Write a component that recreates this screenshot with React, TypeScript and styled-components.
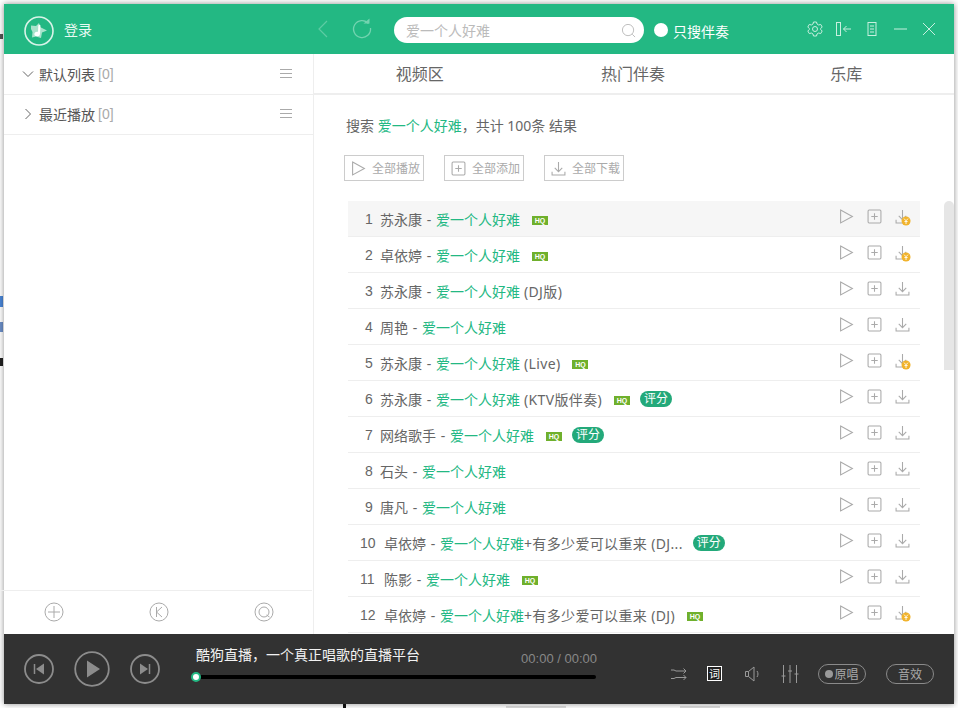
import React from "react";
import styled, { createGlobalStyle } from "styled-components";

const Global = createGlobalStyle`
  html, body { margin: 0; padding: 0; background: #fff; }
  body { width: 958px; height: 708px; overflow: hidden; position: relative;
    font-family: "Noto Sans", "Noto Sans CJK SC", "Liberation Sans", sans-serif; }
  * { box-sizing: border-box; }
`;

const Window = styled.div`
  width: 950px; height: 700px; margin: 4px; display: flex; flex-direction: column;
  background: #fff; box-shadow: 0 0 6px rgba(0,0,0,.45); position: relative; z-index: 1;
`;
const TitleBar = styled.header`
  height: 50px; flex: none; background: #23b883; display: flex; align-items: center; color: #fff;
  position: relative;
`;
const Logo = styled.div`
  margin-left: 20px; margin-top: 4px; width: 30px; height: 30px; display: flex;
`;
const LoginText = styled.span`
  margin-left: 10px; font-size: 14px; color: #eafaf3; width: 50px;
`;
const Nav = styled.div`
  margin-left: 198px; width: 21px; height: 50px; display: flex; align-items: center; justify-content: center;
`;
const Refresh = styled.div`
  margin-left: 18px; width: 22px; height: 22px; margin-top: -2px; display: flex;
`;
const Search = styled.div`
  margin-left: 21px; margin-top: 2px; width: 250px; height: 26px; border-radius: 13px; background: #fff;
  display: flex; align-items: center; justify-content: space-between; padding: 0 8px 0 12px;
  font-size: 14px; color: #bbb;
`;
const RadioDot = styled.span`
  margin-left: 10px; margin-top: 2px; width: 14px; height: 14px; border-radius: 50%; background: #fff; flex: none;
`;
const OnlyText = styled.span`
  margin-left: 5px; margin-top: 3px; font-size: 14px; color: #fff; white-space: nowrap;
`;
const WinIcons = styled.div`
  margin-left: auto; margin-right: 16px; margin-top: 0; display: flex; align-items: center; gap: 10.5px; height: 20px;
`;
const WinIcon = styled.svg`
  width: 18px; height: 18px; fill: none; stroke: #c8efdf; stroke-width: 1; display: block;
`;

const Main = styled.div`
  flex: 1; min-height: 0; display: flex;
`;
const Side = styled.aside`
  width: 310px; flex: none; border-right: 1px solid #eee; display: flex; flex-direction: column; padding-top: 1px;
`;
const Group = styled.div`
  height: 40px; flex: none; border-bottom: 1px solid #eee; display: flex; align-items: center;
  padding: 0 21px 2px 18px; font-size: 14px; color: #555;
`;
const Count = styled.span`
  color: #aaa; margin-left: 3px; font-family: "Liberation Sans", sans-serif;
`;
const Caret = styled.svg`
  width: 12px; height: 12px; margin-right: 5px; fill: none; stroke: #666; stroke-width: 1; flex: none;
`;
const Burger = styled.svg`
  width: 12px; height: 10px; margin-left: auto; stroke: #aaa; stroke-width: 1; flex: none;
`;
const SideSpace = styled.div`
  flex: 1;
`;
const SideFoot = styled.div`
  height: 44px; flex: none; border-top: 1px solid #eee; display: grid; grid-template-columns: repeat(3, 105px);
  align-items: start; justify-items: center; margin-left: -3px; margin-right: 1px; padding-top: 11px;
`;
const FootIcon = styled.svg`
  width: 20px; height: 20px; fill: none; stroke: #aaa; stroke-width: 1;
`;

const Content = styled.section`
  flex: 1; min-width: 0; display: flex; flex-direction: column; position: relative;
`;
const Tabs = styled.nav`
  height: 41px; flex: none; display: grid; grid-template-columns: repeat(3, 1fr); border-bottom: 2px solid #eee;
`;
const Tab = styled.div`
  display: flex; align-items: center; justify-content: center; font-size: 16px; color: #666; padding: 0 2px 1px 0;
`;
const Summary = styled.div`
  padding: 21px 0 0 32px; height: 50px; flex: none; font-size: 14px; color: #666; line-height: 20px; white-space: nowrap;
`;
const Hit = styled.span`
  color: #23b883;
`;
const Actions = styled.div`
  display: flex; gap: 20px; padding-left: 30px; height: 26px; flex: none; margin-top: 10px;
`;
const ActionBtn = styled.div`
  width: 80px; height: 26px; border: 1px solid #ccc; display: flex; align-items: center; padding: 0 0 1px 6px;
  gap: 6px; font-size: 12px; color: #aaa; white-space: nowrap;
`;
const ActionIcon = styled.svg`
  width: 15px; height: 15px; fill: none; stroke: #aaa; stroke-width: 1; flex: none; margin-top: 1px;
`;
const List = styled.div`
  margin: 20px 0 0 34px; width: 572px; flex: 1; min-height: 0; overflow: hidden;
`;
const Row = styled.div<{ $on?: boolean }>`
  height: 36px; border-bottom: 1px solid #eee; background: ${p => (p.$on ? "#f6f6f6" : "#fff")};
  display: flex; align-items: center; padding-left: 12px; font-size: 14px; color: #666; position: relative;
`;
const Num = styled.span<{ $wide?: boolean }>`
  font-size: 14px; color: #666; font-family: "Liberation Sans", sans-serif; width: ${p => (p.$wide ? "24px" : "20px")};
  flex: none; padding-left: ${p => (p.$wide ? "0" : "5px")};
`;
const Title = styled.span`
  white-space: pre;
`;
const Dash = styled.span`
  display: inline-block; width: 14px; text-align: center;
`;
const Extra = styled.span`
  letter-spacing: .35px;
`;
const HQ = styled.span`
  margin-left: 12px; width: 16px; height: 9px; background: #6fb02c; color: #fff; font-family: "Liberation Sans", sans-serif;
  font-size: 7px; font-weight: 700; line-height: 9px; text-align: center; flex: none; margin-top: 3px;
`;
const Score = styled.span`
  margin-left: 10px; width: 32px; height: 16px; border-radius: 8px; background: #23a97a; color: #fff;
  font-size: 12px; line-height: 16px; text-align: center; flex: none;
`;
const RowIcons = styled.div`
  margin-left: auto; display: flex; align-items: center; gap: 13px; width: 71px; margin-top: -5px; margin-right: 10px; flex: none;
`;
const RowIcon = styled.svg`
  width: 15px; height: 15px; fill: none; stroke: #aaa; stroke-width: 1; flex: none; overflow: visible;
`;
const Scrollbar = styled.div`
  position: absolute; top: 147px; right: 0; width: 10px; height: 169px; background: #e6e6e6; border-radius: 5px 5px 0 0;
`;

const Player = styled.footer`
  height: 70px; flex: none; background: #323232; display: flex; align-items: center; position: relative; color: #fff;
`;
const Transport = styled.div`
  display: flex; align-items: center; margin-left: 20px; gap: 20px; width: 172px; flex: none;
`;
const TransportIcon = styled.svg<{ $big?: boolean }>`
  width: ${p => (p.$big ? "36px" : "30px")}; height: ${p => (p.$big ? "36px" : "30px")}; flex: none;
`;
const Track = styled.div`
  width: 400px; flex: none; height: 50px; display: flex; flex-direction: column; padding-top: 1px;
`;
const TrackTop = styled.div`
  display: flex; justify-content: space-between; align-items: center; font-size: 14px; height: 21px; color: #f2f2f2;
`;
const Slogan = styled.span`
  margin-top: -4px;
`;
const Time = styled.span`
  font-family: "Liberation Sans", sans-serif; font-size: 13px; color: #888; margin-top: 5px; margin-right: -1px;
`;
const Bar = styled.div`
  position: relative; height: 4px; margin-top: 9px; background: #000; border-radius: 2px;
`;
const Thumb = styled.span`
  position: absolute; left: -5px; top: -3px; width: 10px; height: 10px; border-radius: 50%;
  background: #fff; border: 2px solid #23b883;
`;
const Tools = styled.div`
  display: flex; align-items: center; margin-left: 74px; margin-top: 9px;
`;
const ToolIcon = styled.svg`
  width: 18px; height: 18px; fill: none; stroke: #999; stroke-width: 1; flex: none; margin-right: 19px;
`;
const Lyric = styled.div`
  width: 15px; height: 15px; border: 1px solid #fff; background: #222; color: #fff; font-size: 11px; line-height: 13px;
  text-align: center; margin-right: 22px; flex: none; overflow: hidden;
`;
const Pill = styled.div`
  width: 48px; height: 20px; border: 1px solid #8a8a8a; border-radius: 10px; color: #aaa; font-size: 12px;
  display: flex; align-items: center; justify-content: center; gap: 1px; flex: none; margin-right: 20px;
`;
const PillDot = styled.span`
  width: 8px; height: 8px; border-radius: 50%; background: #999;
`;
const Backdrop = styled.span<{ $x: number; $y: number; $w: number; $h: number; $c: string }>`
  position: absolute; z-index: 0; left: ${p => p.$x}px; top: ${p => p.$y}px; width: ${p => p.$w}px; height: ${p => p.$h}px;
  background: ${p => p.$c};
`;

type R = { n: number; a: string; t: string; x?: string; hq?: boolean; score?: boolean; pay?: boolean };
const rows: R[] = [
  { n: 1, a: "苏永康", t: "爱一个人好难", hq: true, pay: true },
  { n: 2, a: "卓依婷", t: "爱一个人好难", hq: true, pay: true },
  { n: 3, a: "苏永康", t: "爱一个人好难", x: " (DJ版)" },
  { n: 4, a: "周艳", t: "爱一个人好难" },
  { n: 5, a: "苏永康", t: "爱一个人好难", x: " (Live)", hq: true, pay: true },
  { n: 6, a: "苏永康", t: "爱一个人好难", x: " (KTV版伴奏)", hq: true, score: true },
  { n: 7, a: "网络歌手", t: "爱一个人好难", hq: true, score: true },
  { n: 8, a: "石头", t: "爱一个人好难" },
  { n: 9, a: "唐凡", t: "爱一个人好难" },
  { n: 10, a: "卓依婷", t: "爱一个人好难", x: "+有多少爱可以重来 (DJ...", score: true },
  { n: 11, a: "陈影", t: "爱一个人好难", hq: true },
  { n: 12, a: "卓依婷", t: "爱一个人好难", x: "+有多少爱可以重来 (DJ)", hq: true, pay: true },
];

const PlayGlyph = () => <path d="M1.5 1 L12.5 7 L1.5 13 Z" />;
const AddGlyph = () => (<><rect x="1" y="1" width="12" height="12" rx="1" /><path d="M7 4v6M4 7h6" /></>);
const DownGlyph = () => <path d="M7 1v9M3.5 6.5 7 10l3.5-3.5M1 10v3h12v-3" />;

export default function App() {
  return (
    <>
      <Global />
      <Backdrop $x={0} $y={296} $w={3} $h={11} $c="#4a86d8" />
      <Backdrop $x={0} $y={322} $w={3} $h={10} $c="#6c8fc8" />
      <Backdrop $x={0} $y={358} $w={3} $h={8} $c="#222" />
      <Backdrop $x={0} $y={34} $w={3} $h={5} $c="#555" />
      <Backdrop $x={343} $y={704} $w={3} $h={4} $c="#111" />
      <Backdrop $x={506} $y={706} $w={60} $h={2} $c="#ddd" />
      <Backdrop $x={680} $y={706} $w={40} $h={2} $c="#ddd" />
      <Window>
        <TitleBar>
          <Logo>
            <svg width="30" height="30" viewBox="0 0 30 30">
              <circle cx="15" cy="15" r="14" fill="none" stroke="#d8f3e8" strokeWidth="1.6" />
              <path d="M7 9.500l5 .5 3-3 1 4 7 3.500-5 2-1 5.500-5-1.500-4 1 .5-5.500L7 13z" fill="#a9e3cc" />
              <path d="M15 8.500l1.500 1-.5 8.500a2.800 2.300 0 1 1-2-2.200l.3-5.800z" fill="#fff" />
            </svg>
          </Logo>
          <LoginText>登录</LoginText>
          <Nav>
            <svg width="12" height="20" viewBox="0 0 12 20" fill="none" stroke="#5dcba3" strokeWidth="1.2"><path d="M10 2 2 10l8 8" /></svg>
          </Nav>
          <Refresh>
            <svg width="22" height="22" viewBox="0 0 22 22" fill="none" stroke="#73d3b0" strokeWidth="1.3">
              <path d="M17.500 6.500A8.500 8.500 0 1 0 19.500 11" />
              <path d="M12.500 6.500h6v-5z" fill="#73d3b0" stroke="none" />
            </svg>
          </Refresh>
          <Search>
            爱一个人好难
            <svg width="15" height="15" viewBox="0 0 16 16" fill="none" stroke="#bbb" strokeWidth="1">
              <circle cx="7.500" cy="7.500" r="6" /><path d="M12 12l3 3" />
            </svg>
          </Search>
          <RadioDot />
          <OnlyText>只搜伴奏</OnlyText>
          <WinIcons>
            <WinIcon viewBox="0 0 18 18">
              <path d="M7.500 2h3l.5 2 1.700 1 2-.6 1.500 2.600-1.500 1.500v1l1.500 1.500-1.500 2.600-2-.6-1.700 1-.5 2h-3l-.5-2-1.700-1-2 .6L1.800 11l1.500-1.500v-1L1.800 7l1.500-2.600 2 .6 1.700-1z" />
              <circle cx="9" cy="9" r="2.500" />
            </WinIcon>
            <WinIcon viewBox="0 0 18 18">
              <rect x="1.500" y="2.500" width="4" height="13" />
              <path d="M16 9H8.500M11.500 6 8.500 9l3 3" />
            </WinIcon>
            <WinIcon viewBox="0 0 18 18">
              <rect x="5" y="2.500" width="8" height="13" />
              <path d="M7 6h4M7 9h4M7 12h4" />
            </WinIcon>
            <WinIcon viewBox="0 0 18 18"><path d="M2 9h13" /></WinIcon>
            <WinIcon viewBox="0 0 18 18"><path d="M3 3l12 12M15 3 3 15" /></WinIcon>
          </WinIcons>
        </TitleBar>
        <Main>
          <Side>
            <Group>
              <Caret viewBox="0 0 12 12"><path d="M1 3.500l5 5 5-5" /></Caret>
              默认列表<Count>[0]</Count>
              <Burger viewBox="0 0 12 10"><path d="M0 .5h12M0 4.500h12M0 8.500h12" /></Burger>
            </Group>
            <Group>
              <Caret viewBox="0 0 12 12"><path d="M3.500 1l5 5-5 5" /></Caret>
              最近播放<Count>[0]</Count>
              <Burger viewBox="0 0 12 10"><path d="M0 .5h12M0 4.500h12M0 8.500h12" /></Burger>
            </Group>
            <SideSpace />
            <SideFoot>
              <FootIcon viewBox="0 0 20 20"><circle cx="10" cy="10" r="9" /><path d="M10 4v12M4 10h12" /></FootIcon>
              <FootIcon viewBox="0 0 20 20"><circle cx="10" cy="10" r="9" /><path d="M7.500 5v10M13 5l-5.500 5 5.500 5" /></FootIcon>
              <FootIcon viewBox="0 0 20 20"><circle cx="10" cy="10" r="9" /><circle cx="10" cy="10" r="5" /><path d="M12.500 13l3 2" /></FootIcon>
            </SideFoot>
          </Side>
          <Content>
            <Tabs>
              <Tab>视频区</Tab>
              <Tab>热门伴奏</Tab>
              <Tab>乐库</Tab>
            </Tabs>
            <Summary>
              搜索 <Hit>爱一个人好难</Hit>，共计 100条 结果
            </Summary>
            <Actions>
              <ActionBtn><ActionIcon viewBox="0 0 14 14"><PlayGlyph /></ActionIcon>全部播放</ActionBtn>
              <ActionBtn><ActionIcon viewBox="0 0 14 14"><AddGlyph /></ActionIcon>全部添加</ActionBtn>
              <ActionBtn><ActionIcon viewBox="0 0 14 14"><DownGlyph /></ActionIcon>全部下载</ActionBtn>
            </Actions>
            <List>
              {rows.map(r => (
                <Row key={r.n} $on={r.n === 1}>
                  <Num $wide={r.n > 9}>{r.n}</Num>
                  <Title>
                    {r.a}<Dash>-</Dash><Hit>{r.t}</Hit>{r.x && <Extra>{r.x}</Extra>}
                  </Title>
                  {r.hq && <HQ>HQ</HQ>}
                  {r.score && <Score>评分</Score>}
                  <RowIcons>
                    <RowIcon viewBox="0 0 14 14"><PlayGlyph /></RowIcon>
                    <RowIcon viewBox="0 0 14 14"><AddGlyph /></RowIcon>
                    <RowIcon viewBox="0 0 14 14">
                      <DownGlyph />
                      {r.pay && (
                        <>
                          <circle cx="10.300" cy="11.200" r="4.200" fill="#f1b32c" stroke="none" />
                          <path d="M8.500 9 10.300 11l1.800-2M10.300 11v3M8.800 11.700h3" stroke="#fff" strokeWidth=".8" />
                        </>
                      )}
                    </RowIcon>
                  </RowIcons>
                </Row>
              ))}
            </List>
            <Scrollbar />
          </Content>
        </Main>
        <Player>
          <Transport>
            <TransportIcon viewBox="0 0 30 30">
              <circle cx="15" cy="15" r="14" fill="none" stroke="#8c8c8c" strokeWidth="1.800" />
              <path d="M10.500 10v10" stroke="#8c8c8c" strokeWidth="1.500" /><path d="M20 9.500v11L12 15z" fill="#8c8c8c" />
            </TransportIcon>
            <TransportIcon $big viewBox="0 0 36 36">
              <circle cx="18" cy="18" r="16.800" fill="none" stroke="#8c8c8c" strokeWidth="1.800" />
              <path d="M13 9.500 26 18l-13 8.500z" fill="#8c8c8c" />
            </TransportIcon>
            <TransportIcon viewBox="0 0 30 30">
              <circle cx="15" cy="15" r="14" fill="none" stroke="#8c8c8c" strokeWidth="1.800" />
              <path d="M19.500 10v10" stroke="#8c8c8c" strokeWidth="1.500" /><path d="M10 9.500v11l8-5.500z" fill="#8c8c8c" />
            </TransportIcon>
          </Transport>
          <Track>
            <TrackTop>
              <Slogan>酷狗直播，一个真正唱歌的直播平台</Slogan>
              <Time>00:00 / 00:00</Time>
            </TrackTop>
            <Bar><Thumb /></Bar>
          </Track>
          <Tools>
            <ToolIcon viewBox="0 0 18 18"><path d="M1 5h3l2 1h10M1 13.500h3l2-1h10M13.500 3.500 16 6l-2.500 2.500M13.500 10 16 12.500 13.500 15" /></ToolIcon>
            <Lyric>词</Lyric>
            <ToolIcon viewBox="0 0 18 18"><path d="M1.500 6.500h3v5h-3zM4.500 6.500 10 2v14l-5.500-4.500M13 6c1.300 1.800 1.300 4.200 0 6" /></ToolIcon>
            <ToolIcon viewBox="0 0 18 18"><path d="M2.500 0v18M9 0v18M15.500 0v18M.5 11h4M7 6h4M13.500 9h4" /></ToolIcon>
            <Pill><PillDot />原唱</Pill>
            <Pill>音效</Pill>
          </Tools>
        </Player>
      </Window>
    </>
  );
}
